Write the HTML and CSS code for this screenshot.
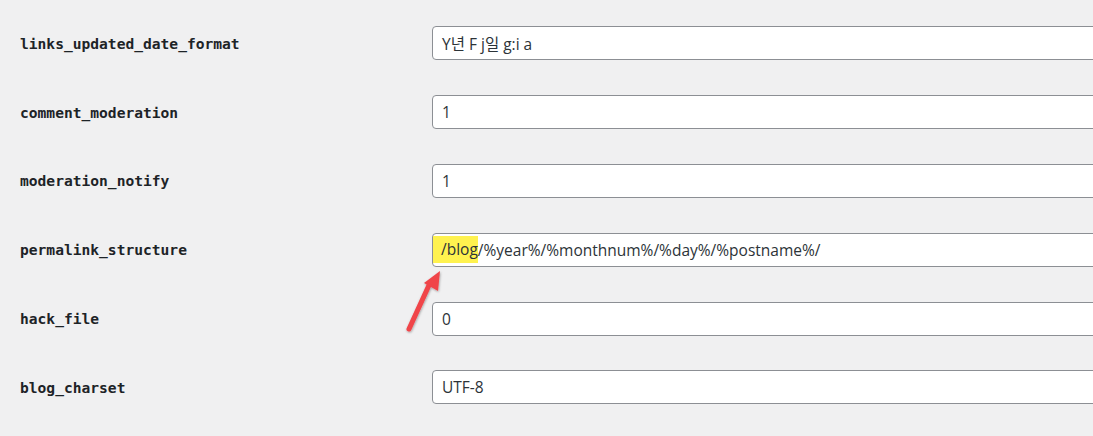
FILE: index.html
```html
<!DOCTYPE html>
<html lang="ko">
<head>
<meta charset="utf-8">
<title>Options</title>
<link rel="stylesheet" href="styles.css">
</head>
<body>
<div class="page">
  <div class="options">
    <div class="row">
      <div class="label">links_updated_date_format</div>
      <div class="field">Y년 F j일 g:i a</div>
    </div>
    <div class="row">
      <div class="label">comment_moderation</div>
      <div class="field">1</div>
    </div>
    <div class="row">
      <div class="label">moderation_notify</div>
      <div class="field">1</div>
    </div>
    <div class="row">
      <div class="label">permalink_structure</div>
      <div class="field"><span class="mark">/blog</span>/%year%/%monthnum%/%day%/%postname%/</div>
    </div>
    <div class="row">
      <div class="label">hack_file</div>
      <div class="field">0</div>
    </div>
    <div class="row">
      <div class="label">blog_charset</div>
      <div class="field">UTF-8</div>
    </div>
  </div>
  <svg class="arrow" width="60" height="80" viewBox="0 0 60 80" aria-hidden="true">
    <defs>
      <filter id="sh" x="-50%" y="-50%" width="200%" height="200%">
        <feDropShadow dx="0.5" dy="1" stdDeviation="1" flood-color="#000" flood-opacity="0.35"/>
      </filter>
    </defs>
    <g filter="url(#sh)">
      <line x1="14" y1="69" x2="35" y2="23" stroke="#f0444a" stroke-width="5" stroke-linecap="round"/>
      <polygon points="45,11 29,23 43,31" fill="#f0444a"/>
    </g>
  </svg>
</div>
</body>
</html>
```
FILE: styles.css
```css
html, body {
  margin: 0;
  padding: 0;
  background: #f0f0f1;
  overflow: hidden;
}
.page {
  position: relative;
  width: 1093px;
  height: 436px;
  overflow: hidden;
}
.options {
  display: flex;
  flex-direction: column;
  padding-top: 9px;
}
.row {
  display: flex;
  align-items: center;
  height: 68.8px;
}
.label {
  width: 432px;
  padding-left: 20px;
  box-sizing: border-box;
  flex: none;
  font-family: "DejaVu Sans Mono", "Liberation Mono", monospace;
  font-weight: bold;
  font-size: 14.6px;
  color: #1d2327;
}
.field {
  flex: none;
  width: 700px;
  height: 34px;
  box-sizing: border-box;
  border: 1px solid #8c8f94;
  border-radius: 4px;
  background: #fff;
  padding: 0 9px;
  display: flex;
  align-items: center;
  font-family: "Open Sans", "Noto Sans", "Noto Sans CJK KR", sans-serif;
  font-size: 15.5px;
  color: #2c3338;
  white-space: nowrap;
}
.mark {
  background: #fff24f;
  margin-left: -9px;
  padding-left: 8px;
  line-height: 27px;
}
.arrow {
  position: absolute;
  left: 395px;
  top: 260px;
}
```
